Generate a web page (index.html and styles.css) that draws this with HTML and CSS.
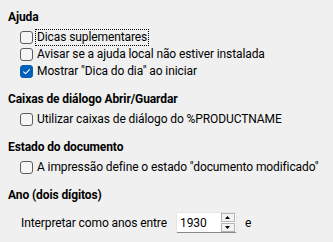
FILE: index.html
```html
<!DOCTYPE html>
<html lang="pt">
<head>
<meta charset="utf-8">
<link rel="stylesheet" href="styles.css">
</head>
<body>
<div class="page">
  <section class="group">
    <div class="heading">Ajuda</div>
    <label class="row"><span class="box"></span><span class="text focus">Dicas suplementares</span></label>
    <label class="row"><span class="box"></span><span class="text">Avisar se a ajuda local não estiver instalada</span></label>
    <label class="row"><span class="box checked"><svg viewBox="0 0 13 13" width="13" height="13"><path d="M3.6 6.8 L5.6 8.7 L9.5 4.6" fill="none" stroke="#fff" stroke-width="1.1" stroke-linecap="round" stroke-linejoin="round"/></svg></span><span class="text">Mostrar "Dica do dia" ao iniciar</span></label>
  </section>
  <section class="group">
    <div class="heading">Caixas de diálogo Abrir/Guardar</div>
    <label class="row"><span class="box"></span><span class="text">Utilizar caixas de diálogo do %PRODUCTNAME</span></label>
  </section>
  <section class="group">
    <div class="heading">Estado do documento</div>
    <label class="row"><span class="box"></span><span class="text">A impressão define o estado "documento modificado"</span></label>
  </section>
  <section class="group">
    <div class="heading">Ano (dois dígitos)</div>
    <div class="yearrow">
      <span class="label">Interpretar como anos entre</span>
      <span class="spin">
        <span class="value">1930</span>
        <span class="buttons">
          <span class="btn"><svg viewBox="0 0 11 7" width="11" height="7"><path d="M3 5 L8 5 L5.5 2 Z" fill="#000"/></svg></span>
          <span class="btn"><svg viewBox="0 0 11 7" width="11" height="7"><path d="M3 2 L8 2 L5.5 5 Z" fill="#000"/></svg></span>
        </span>
      </span>
      <span class="label after">e</span>
    </div>
  </section>
</div>
</body>
</html>
```

FILE: styles.css
```css
html, body {
  margin: 0;
  padding: 0;
  background: #f0f0f0;
}
body {
  font-family: Roboto, "Noto Sans", sans-serif;
  font-size: 12px;
  letter-spacing: -0.1px;
  color: #000;
}
.page {
  padding: 8px 0 0 8px;
}
.group {
  margin-bottom: 10px;
}
.heading {
  font-weight: bold;
  height: 18px;
  line-height: 18px;
  margin-bottom: 3px;
}
.row {
  display: flex;
  align-items: center;
  height: 17px;
  padding-left: 12px;
}
.box {
  box-sizing: border-box;
  width: 13px;
  height: 13px;
  border: 1px solid #5e5e5e;
  border-radius: 3px;
  background: #f5f5f5;
  flex: none;
  position: relative;
}
.box.checked {
  background: #005fb8;
  border-color: #005fb8;
}
.box svg {
  position: absolute;
  left: -1px;
  top: -1px;
}
.text {
  margin-left: 3px;
  padding: 0 1px;
  line-height: 15px;
  white-space: nowrap;
}
.focus {
  outline: 1px dotted #000;
}
.yearrow {
  display: flex;
  align-items: center;
  height: 21px;
  padding-left: 13px;
  margin-top: 8px;
}
.spin {
  display: flex;
  align-items: center;
  box-sizing: border-box;
  width: 61px;
  height: 21px;
  margin-left: 9px;
  background: #fff;
  border: 1px solid #e6e6e6;
  border-bottom-color: #8a8a8a;
  border-radius: 2px;
  padding-left: 3px;
}
.value {
  flex: 1;
}
.buttons {
  display: flex;
  flex-direction: column;
  gap: 1px;
  margin-right: 1px;
}
.btn {
  box-sizing: border-box;
  width: 14px;
  height: 9px;
  border: 1px solid #b4b4b4;
  background: #f3f3f3;
  display: flex;
  align-items: center;
  justify-content: center;
}
.btn svg {
  display: block;
}
.after {
  margin-left: 8px;
}
```
